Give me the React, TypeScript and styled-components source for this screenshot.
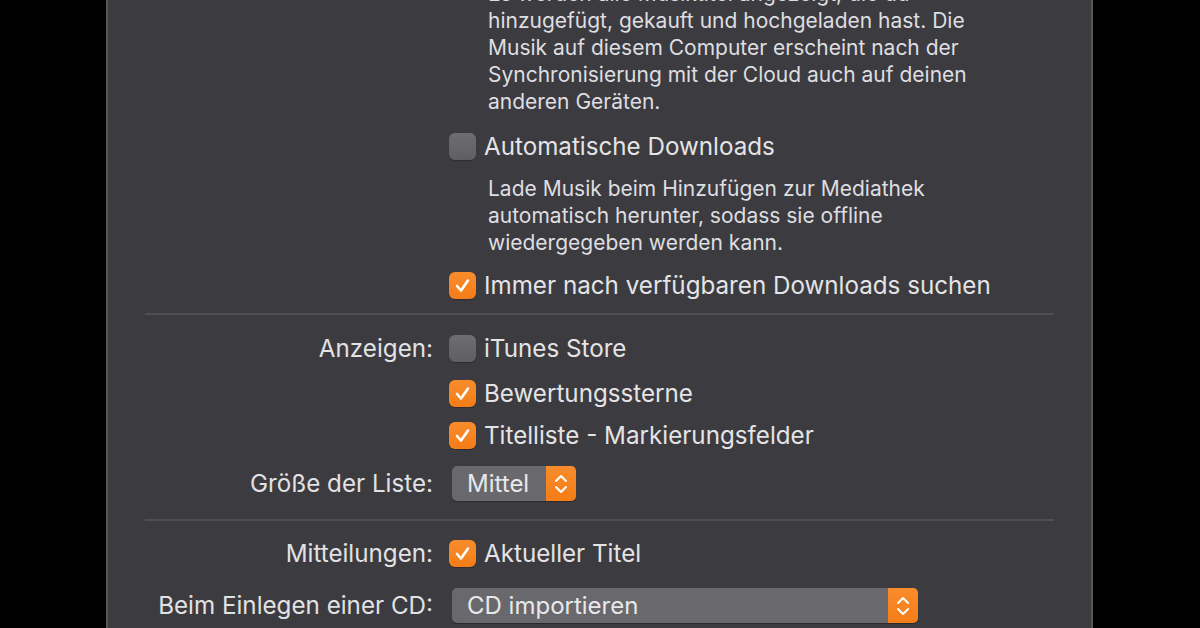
import React from 'react';
import styled, { createGlobalStyle } from 'styled-components';

const GlobalStyle = createGlobalStyle`
    html, body {
        margin: 0;
        padding: 0;
        background: #000;
        overflow: hidden;
    }
    body {
        font-family: Inter, "Noto Sans", "Liberation Sans", sans-serif;
        -webkit-font-smoothing: antialiased;
    }
`;

const Window = styled.div`
    margin-left: 106px;
    width: 983px;
    height: 628px;
    overflow: hidden;
    background-color: #3c3b40;
    border-left: 2px solid #57565b;
    border-right: 2px solid #57565b;
`;

const Row = styled.div<{ $top: number; $height?: number }>`
    display: grid;
    grid-template-columns: 325px 1fr;
    column-gap: 16px;
    align-items: center;
    margin-top: ${p => p.$top}px;
    height: ${p => p.$height ?? 34}px;
`;

const Label = styled.div`
    text-align: right;
    color: #e2e2e4;
    font-size: 24.2px;
    white-space: nowrap;
`;

const Control = styled.div`
    display: flex;
    align-items: center;
`;

const Box = styled.span<{ $checked?: boolean }>`
    width: 27px;
    height: 27px;
    border-radius: 6px;
    flex-shrink: 0;
    display: flex;
    align-items: center;
    justify-content: center;
    background: ${p => p.$checked
        ? 'linear-gradient(#f98c2c, #f47d17)'
        : 'linear-gradient(#6e6d72, #5f5e63)'};
    box-shadow: 0 1px 1px rgba(0, 0, 0, 0.25);
`;

const CheckText = styled.span`
    margin-left: 8px;
    color: #e4e4e6;
    font-size: 24.2px;
    white-space: nowrap;
`;

const Description = styled.p<{ $top: number }>`
    margin: ${p => p.$top}px 0 0 380px;
    color: #dedee0;
    font-size: 21px;
    line-height: 27px;
    white-space: nowrap;
`;

const Separator = styled.div<{ $top: number }>`
    margin: ${p => p.$top}px 37px 0 37px;
    height: 2px;
    background-color: #4f4e53;
`;

const Popup = styled.div<{ $width: number }>`
    width: ${p => p.$width}px;
    height: 35px;
    margin-left: 3px;
    display: flex;
    align-items: stretch;
    border-radius: 5px;
    overflow: hidden;
    background-color: #69686d;
    box-shadow: 0 1px 1px rgba(0, 0, 0, 0.3);
`;

const PopupValue = styled.span`
    flex: 1;
    display: flex;
    align-items: center;
    padding-left: 15px;
    color: #e8e8ea;
    font-size: 24px;
`;

const Stepper = styled.span`
    width: 30px;
    display: flex;
    align-items: center;
    justify-content: center;
    background: linear-gradient(#f98c2c, #f47d17);
`;

const Check = () => (
    <svg width="19" height="19" viewBox="0 0 19 19">
        <path d="M4 10 L8 14.5 L15 4.5" fill="none" stroke="#fff" strokeWidth="2.6" strokeLinecap="round" strokeLinejoin="round" />
    </svg>
);

const Chevrons = () => (
    <svg width="16" height="26" viewBox="0 0 16 26">
        <path d="M3 10 L8 5 L13 10 M3 16 L8 21 L13 16" fill="none" stroke="#fff" strokeWidth="2" strokeLinecap="round" strokeLinejoin="round" />
    </svg>
);

const CheckBox = ({ checked, children }: { checked?: boolean; children: React.ReactNode }) => (
    <Control>
        <Box $checked={checked}>{checked && <Check />}</Box>
        <CheckText>{children}</CheckText>
    </Control>
);

const App = () => {
    return (
        <>
            <GlobalStyle />
            <Window>
                <Description $top={-20}>
                    Es werden alle Musiktitel angezeigt, die du<br />
                    hinzugefügt, gekauft und hochgeladen hast. Die<br />
                    Musik auf diesem Computer erscheint nach der<br />
                    Synchronisierung mit der Cloud auch auf deinen<br />
                    anderen Geräten.
                </Description>
                <Row $top={14}>
                    <Label />
                    <CheckBox>Automatische Downloads</CheckBox>
                </Row>
                <Description $top={12}>
                    Lade Musik beim Hinzufügen zur Mediathek<br />
                    automatisch herunter, sodass sie offline<br />
                    wiedergegeben werden kann.
                </Description>
                <Row $top={12}>
                    <Label />
                    <CheckBox checked>Immer nach verfügbaren Downloads suchen</CheckBox>
                </Row>
                <Separator $top={11} />
                <Row $top={16}>
                    <Label>Anzeigen:</Label>
                    <CheckBox>iTunes Store</CheckBox>
                </Row>
                <Row $top={11}>
                    <Label />
                    <CheckBox checked>Bewertungssterne</CheckBox>
                </Row>
                <Row $top={8}>
                    <Label />
                    <CheckBox checked>Titelliste - Markierungsfelder</CheckBox>
                </Row>
                <Row $top={14} $height={35}>
                    <Label>Größe der Liste:</Label>
                    <Control>
                        <Popup $width={124}>
                            <PopupValue>Mittel</PopupValue>
                            <Stepper><Chevrons /></Stepper>
                        </Popup>
                    </Control>
                </Row>
                <Separator $top={18} />
                <Row $top={15}>
                    <Label>Mitteilungen:</Label>
                    <CheckBox checked>Aktueller Titel</CheckBox>
                </Row>
                <Row $top={18} $height={35}>
                    <Label>Beim Einlegen einer CD:</Label>
                    <Control>
                        <Popup $width={466}>
                            <PopupValue>CD importieren</PopupValue>
                            <Stepper><Chevrons /></Stepper>
                        </Popup>
                    </Control>
                </Row>
            </Window>
        </>
    );
};

export default App;
